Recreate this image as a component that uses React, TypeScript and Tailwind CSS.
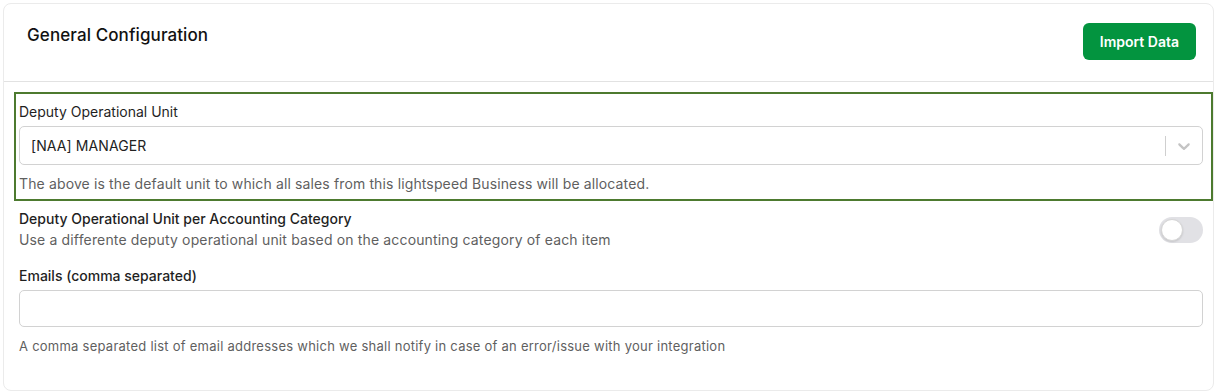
import React from 'react';

const font = { fontFamily: 'Inter, "Liberation Sans", sans-serif' };

function ChevronDown() {
    return (
        <svg viewBox="0 0 20 20" width="20" height="20" className="fill-[#c4c4c4]">
            <path d="M4.516 7.548c0.436-0.446 1.043-0.481 1.576 0l3.908 3.747 3.908-3.747c0.533-0.481 1.141-0.446 1.574 0 0.436 0.445 0.408 1.197 0 1.615-0.406 0.418-4.695 4.502-4.695 4.502-0.217 0.223-0.502 0.335-0.787 0.335s-0.57-0.112-0.789-0.335c0 0-4.287-4.084-4.695-4.502s-0.436-1.17 0-1.615z" />
        </svg>
    );
}

export default function App() {
    return (
        <div className="bg-white min-h-[391px] pt-[3px] pl-[3px]" style={font}>
            <div className="w-[1211px] h-[388px] border border-[#ebebeb] rounded-[8px] bg-white text-[#1d1d1f]">
                {/* Header */}
                <div className="flex items-start justify-between pt-[19px] pb-[21px] pl-[23px] pr-[17px] border-b border-[#e2e2e2]">
                    <h2 className="text-[17px] leading-6 font-medium tracking-[0.1px] text-[#111]">General Configuration</h2>
                    <button className="h-[37px] px-[17px] rounded-[6px] bg-[#03943f] text-white text-[14px] font-semibold">
                        Import Data
                    </button>
                </div>

                {/* Highlighted unit */}
                <div className="mt-[10px] ml-[10px] mr-0 border-2 border-[#4d7a2f] pt-[8px] pb-[5px] pl-[3px] pr-[8px]">
                    <label className="block text-[14px] leading-5 text-[#1f1f1f]">Deputy Operational Unit</label>
                    <div className="mt-[4px] h-[39px] flex items-center border border-[#d2d2d2] rounded-[5px]">
                        <span className="flex-1 pl-[11px] text-[14px] tracking-[0.1px] text-[#222]">[NAA] MANAGER</span>
                        <span className="w-px h-[20px] bg-[#cfcfcf]" />
                        <span className="px-[8px] flex items-center"><ChevronDown /></span>
                    </div>
                    <p className="mt-[9px] text-[14px] leading-5 tracking-[0.13px] text-[#5f5f5f]">
                        The above is the default unit to which all sales from this lightspeed Business will be allocated.
                    </p>
                </div>

                {/* Per category toggle */}
                <div className="mt-[8px] pl-[15px] pr-[10px] flex items-center justify-between">
                    <div>
                        <div className="text-[14px] leading-5 font-medium text-[#1f1f1f]">Deputy Operational Unit per Accounting Category</div>
                        <div className="mt-px text-[14px] leading-5 tracking-[0.15px] text-[#5f5f5f]">Use a differente deputy operational unit based on the accounting category of each item</div>
                    </div>
                    <div className="w-[44px] h-[26px] rounded-full bg-[#e1e1e5] p-[2px] flex items-center">
                        <span className="w-[22px] h-[22px] rounded-full bg-white border border-[#d6d6d6] shadow-[0_1px_2px_rgba(0,0,0,0.12)]" />
                    </div>
                </div>

                {/* Emails */}
                <div className="mt-[16px] pl-[15px] pr-[10px]">
                    <label className="block text-[14px] leading-5 font-medium text-[#1f1f1f]">Emails (comma separated)</label>
                    <input className="mt-[4px] w-full h-[37px] border border-[#d2d2d2] rounded-[5px] outline-none" />
                    <p className="mt-[9px] text-[13px] leading-5 tracking-[0.25px] text-[#5f5f5f]">
                        A comma separated list of email addresses which we shall notify in case of an error/issue with your integration
                    </p>
                </div>
            </div>
        </div>
    );
}
